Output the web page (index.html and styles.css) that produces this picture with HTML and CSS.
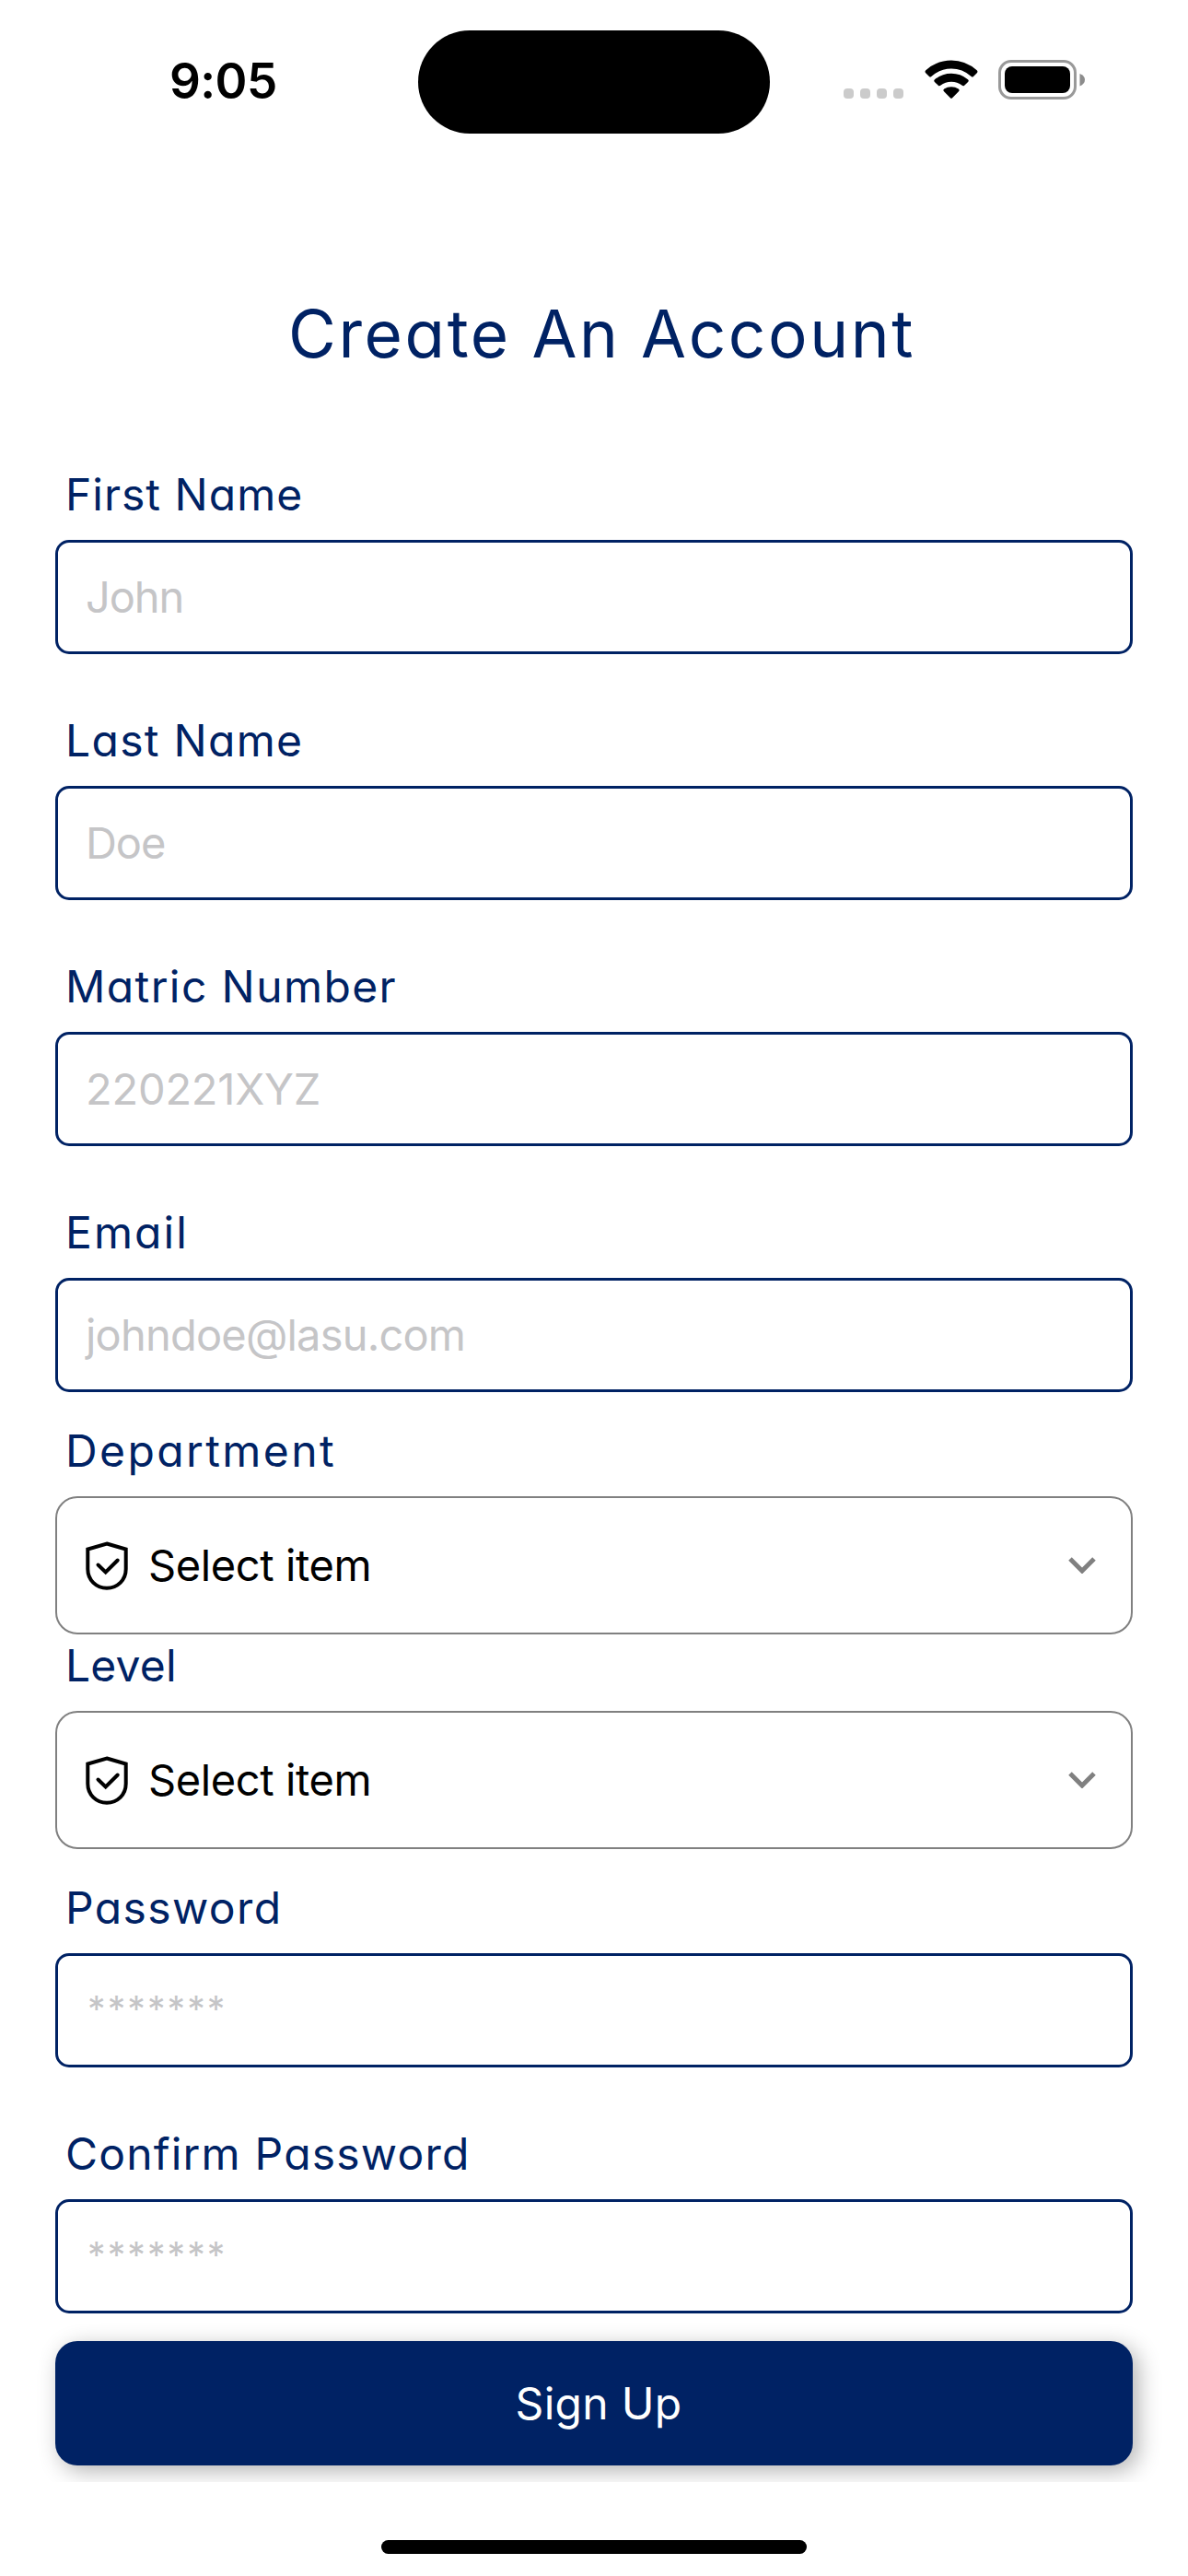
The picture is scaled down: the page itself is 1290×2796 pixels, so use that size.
FILE: index.html
```html
<!DOCTYPE html>
<html lang="en">
<head>
<meta charset="utf-8">
<title>Create An Account</title>
<link rel="stylesheet" href="styles.css">
</head>
<body>
<header class="status">
  <div class="time">9:05</div>
  <div class="island"></div>
  <div class="indicators">
    <div class="signal"><i></i><i></i><i></i><i></i></div>
    <svg class="wifi" width="58" height="43" viewBox="0 0 58 43"><path d="M1.2 14.2Q-.2 12.7 1.3 11.3Q13.500 .500 29 .500T56.700 11.300Q58.200 12.700 56.800 14.200L53 17.900Q51.900 18.900 50.700 17.900Q41 9.500 29 9.500T7.300 17.900Q6.100 18.900 5 17.900ZM10.900 23.900Q9.500 22.500 11 21.200Q19 14.800 29 14.800T47 21.200Q48.500 22.500 47.100 23.900L43.200 27.700Q42.100 28.800 40.800 27.800Q35.500 23.800 29 23.800T17.200 27.800Q15.900 28.800 14.800 27.700ZM21 34.200Q19.600 32.800 21.200 31.600Q24.700 29.200 29 29.200T36.800 31.600Q38.400 32.800 37 34.200L30.100 41.200Q29 42.200 27.900 41.200Z"/></svg>
    <svg class="battery" width="95" height="43" viewBox="0 0 95 43"><rect x="1.500" y="1.500" width="82" height="40" rx="12.500" fill="none" stroke="#999" stroke-width="3"/><rect x="7" y="7" width="71" height="29" rx="8"/><path d="M88.500 15Q94 17 94 21.500T88.500 28.500Z" fill="#8c8c8c"/></svg>
  </div>
</header>
<main class="screen">
  <h1 class="title brand">Create An Account</h1>
  <form class="form">
    <div class="field"><label class="label brand first">First Name</label><div class="input">John</div></div>
    <div class="field"><label class="label brand last">Last Name</label><div class="input">Doe</div></div>
    <div class="field"><label class="label brand matric">Matric Number</label><div class="input number">220221XYZ</div></div>
    <div class="field"><label class="label brand email">Email</label><div class="input address">johndoe@lasu.com</div></div>
    <div class="field close"><label class="label brand department">Department</label>
      <div class="select">
        <svg class="shield" width="47" height="54" viewBox="0 0 47 54"><path d="M24 3.500L44.700 9.500V31C44.700 43 35.500 51.700 24 51.700S3.300 43 3.300 31V9.500Z"/><path d="M14.500 26.500L22.700 34.500L35.700 21.500" stroke-linecap="round"/></svg>
        <span class="choice">Select item</span>
        <svg class="chevron" width="30" height="18" viewBox="0 0 30 18"><path d="M2 2L15 15L28 2"/></svg>
      </div></div>
    <div class="field tight"><label class="label brand level">Level</label>
      <div class="select">
        <svg class="shield" width="47" height="54" viewBox="0 0 47 54"><path d="M24 3.500L44.700 9.500V31C44.700 43 35.500 51.700 24 51.700S3.300 43 3.300 31V9.500Z"/><path d="M14.500 26.500L22.700 34.500L35.700 21.500" stroke-linecap="round"/></svg>
        <span class="choice">Select item</span>
        <svg class="chevron" width="30" height="18" viewBox="0 0 30 18"><path d="M2 2L15 15L28 2"/></svg>
      </div></div>
    <div class="field close"><label class="label brand password">Password</label><div class="input secret">*******</div></div>
    <div class="field"><label class="label brand confirm">Confirm Password</label><div class="input secret">*******</div></div>
    <button type="button" class="submit">Sign Up</button>
  </form>
</main>
<footer class="home"><div class="bar"></div></footer>
</body>
</html>
```
FILE: styles.css
```css
* { box-sizing: border-box; }
body {
  margin: 0;
  height: 2796px;
  display: flex;
  flex-direction: column;
  background: #fff;
  color: #000;
  font-family: Inter, "Liberation Sans", sans-serif;
}
/* single-storey "a" for the headings and labels */
.brand { color: #002264; font-feature-settings: "cv11"; font-weight: 400; }

.status { height: 178px; padding-top: 33px; display: grid; grid-template-columns: 454px 382px 1fr; }
.time { height: 112px; padding-left: 184px; font-size: 53px; font-weight: 600; line-height: 111px; letter-spacing: -.6px; }
.island { height: 112px; border-radius: 56px; background: #000; }
.indicators { height: 75px; padding-left: 80px; display: flex; align-items: flex-end; }
.signal { display: flex; gap: 7px; margin-bottom: 1px; }
.signal i { width: 11px; height: 11px; border-radius: 4px; background: #cbcbcb; }
.wifi { margin-left: 22.5px; }
.battery { margin-left: 22.5px; }

.screen { height: 2516px; padding: 0 60px; overflow: hidden; }
.title { margin: 134px 0 0 253px; font-size: 71px; line-height: 100px; letter-spacing: 2.6px; white-space: nowrap; }
.form { padding-top: 97px; display: flex; flex-direction: column; }
.field + .field { margin-top: 66px; }
.field + .field.close { margin-top: 36px; }
.field + .field.tight { margin-top: 6px; }
.label { display: block; height: 56px; margin-bottom: 21px; padding-left: 11px; font-size: 48px; line-height: 55px; white-space: nowrap; }
.first { letter-spacing: 1px; }
.last { letter-spacing: 1.3px; }
.matric { letter-spacing: 1.4px; }
.email { letter-spacing: 2.1px; }
.department { letter-spacing: 2.4px; }
.level { letter-spacing: .2px; }
.password { letter-spacing: 1.4px; }
.confirm { letter-spacing: 1.2px; }

.input { height: 124px; padding-left: 30px; border: 3px solid #002264; border-radius: 15px; color: #c5c5c7; font-size: 47px; line-height: 117px; letter-spacing: -1.1px; }
.number { letter-spacing: -.2px; }
.address { letter-spacing: -.8px; }
.secret { padding-left: 32px; font-size: 39px; line-height: 115px; letter-spacing: 2.1px; }

.select { height: 150px; padding: 0 38px 0 30px; display: flex; align-items: center; border: 2px solid #808080; border-radius: 24px; }
.shield { fill: none; stroke: #000; stroke-width: 4; }
.choice { margin-left: 22px; padding-bottom: 2px; font-size: 47px; letter-spacing: -.4px; }
.chevron { margin-left: auto; fill: none; stroke: #808080; stroke-width: 5; }

.submit { height: 135px; margin-top: 30px; padding: 0 0 0 10px; border: 0; border-radius: 24px; background: #002264; color: #fff; font-family: inherit; font-size: 48px; letter-spacing: .3px; box-shadow: 6px 6px 24px rgba(0, 0, 0, .3); }

.home { padding-top: 63px; }
.bar { width: 462px; height: 15px; margin: 0 auto; border-radius: 8px; background: #000; }
```
